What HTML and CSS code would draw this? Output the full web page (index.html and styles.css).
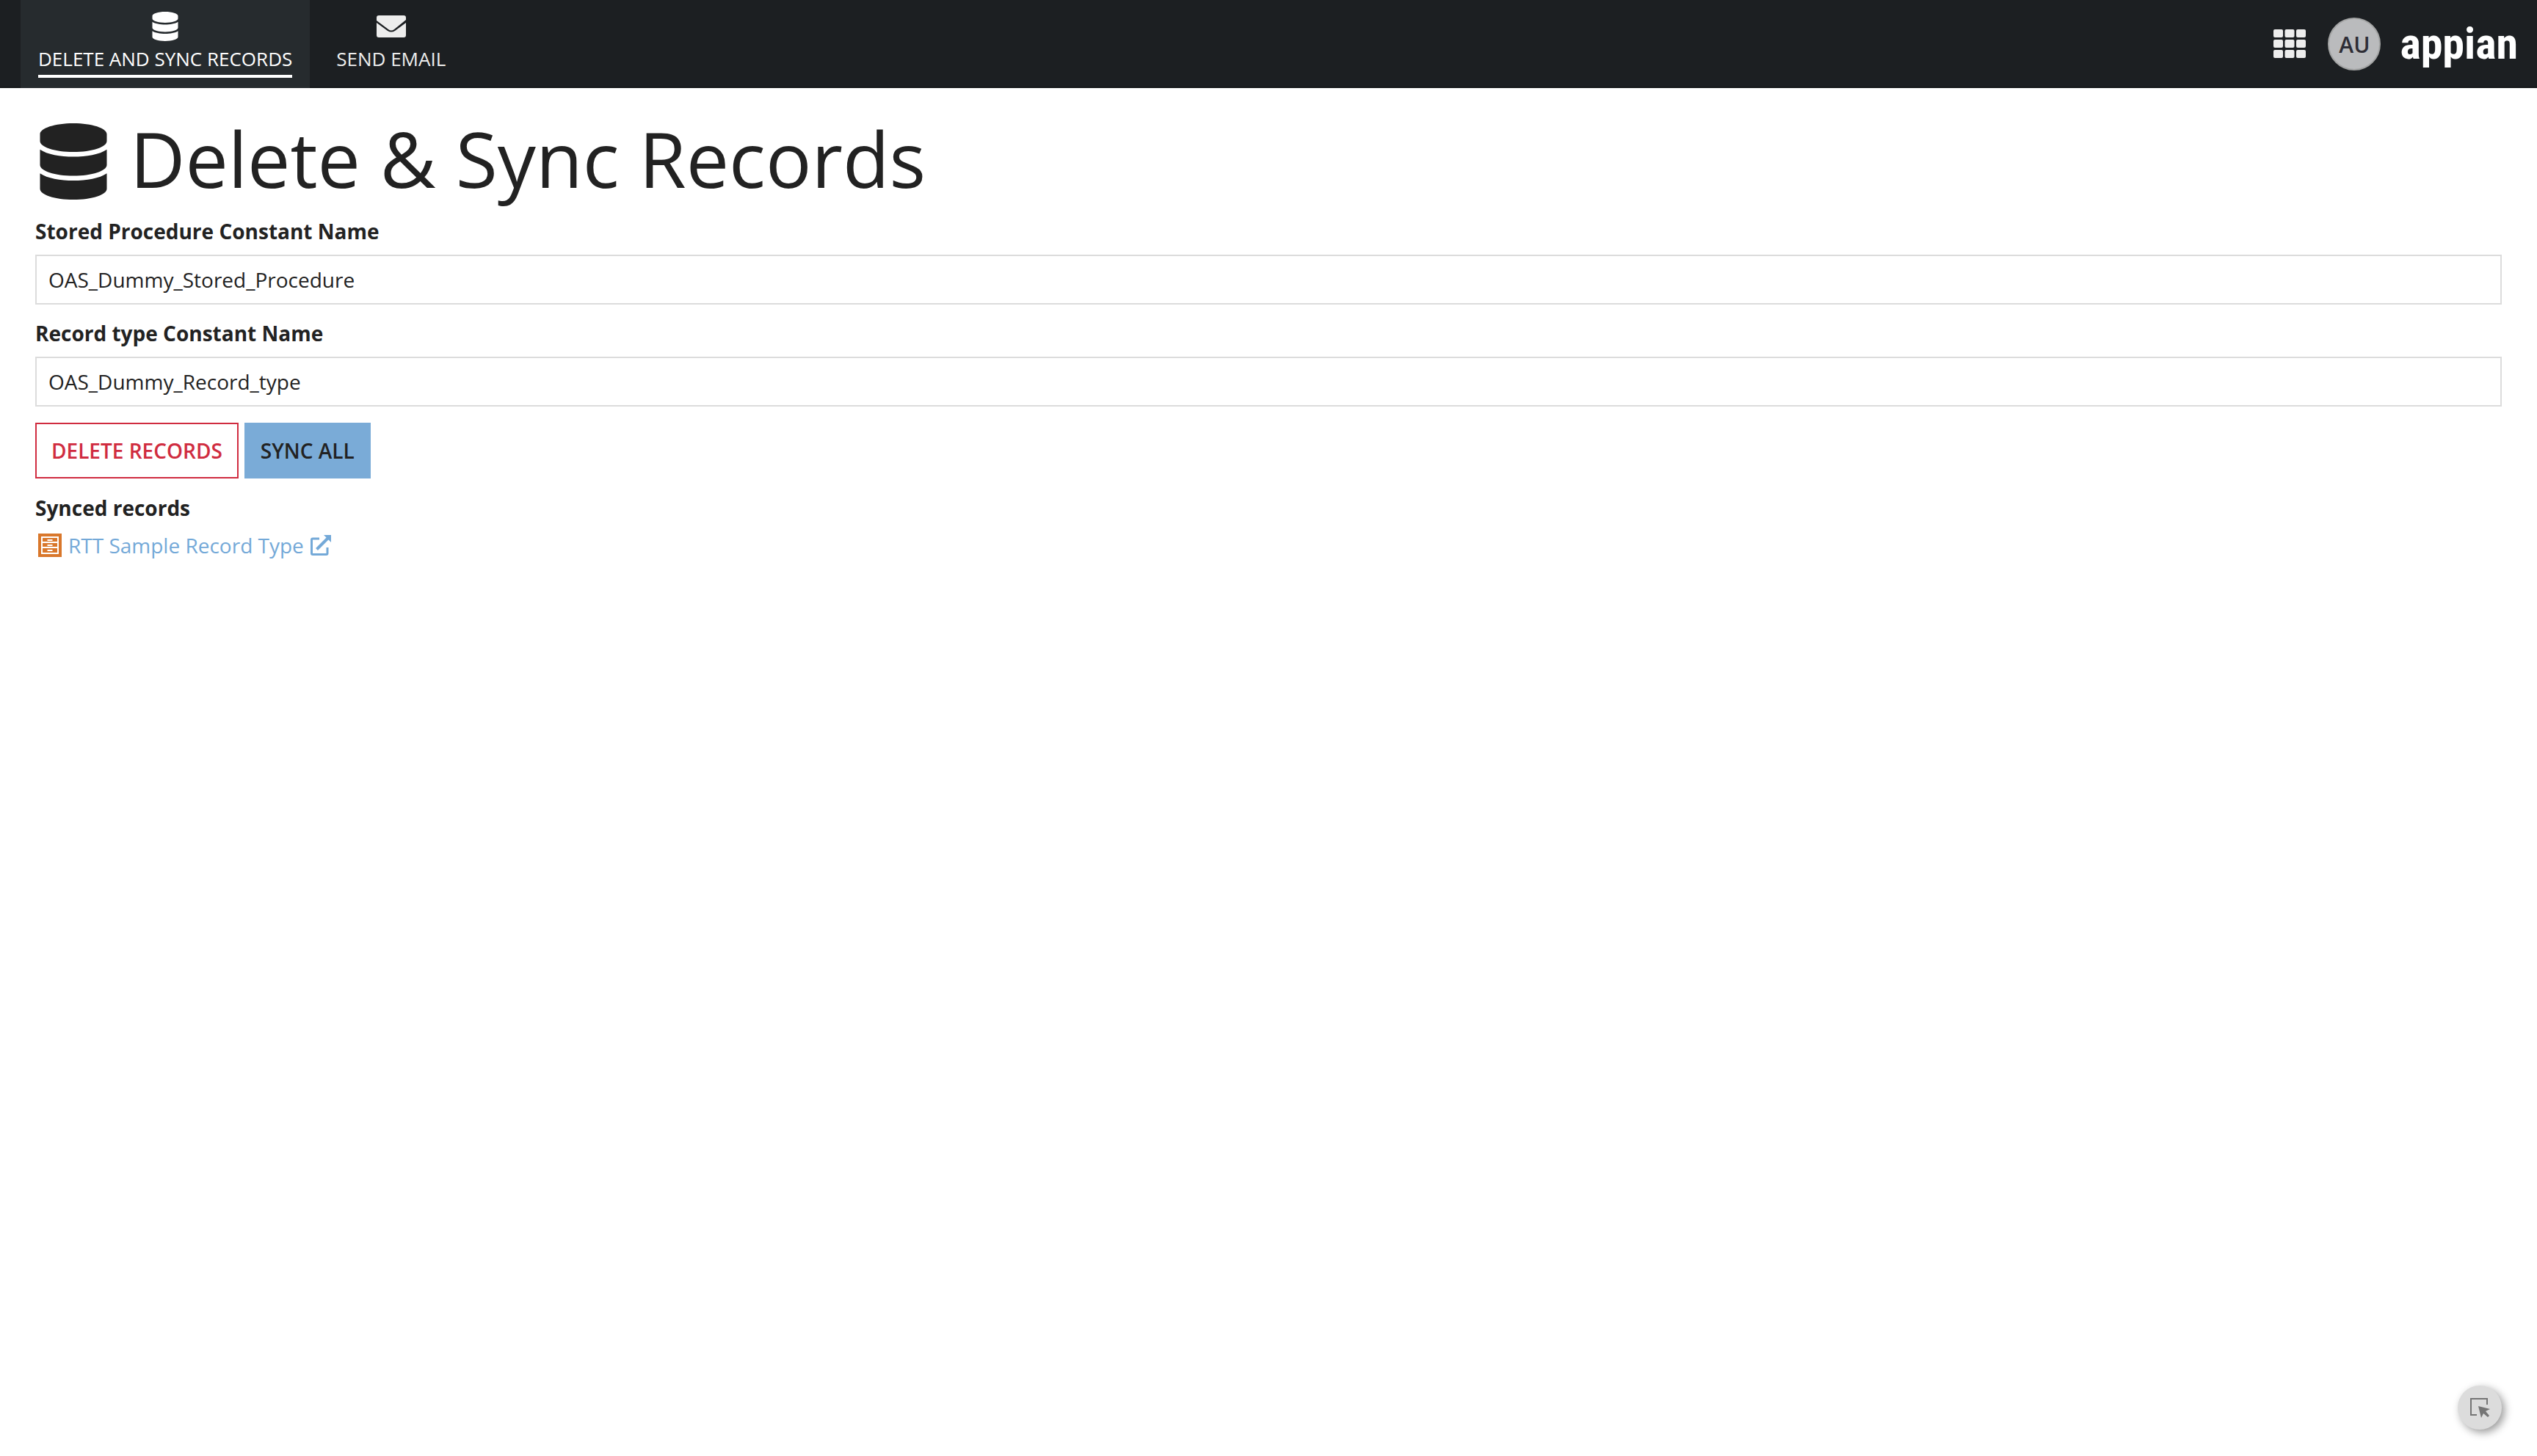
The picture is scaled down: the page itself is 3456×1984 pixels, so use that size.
FILE: index.html
```html
<!DOCTYPE html>
<html lang="en">
<head>
<meta charset="utf-8">
<title>Delete &amp; Sync Records</title>
<link rel="stylesheet" href="styles.css">
</head>
<body>
<svg class="sprite" aria-hidden="true">
  <symbol id="database" viewBox="0 0 448 512"><path d="M448 73.143v45.714C448 159.143 347.667 192 224 192S0 159.143 0 118.857V73.143C0 32.857 100.333 0 224 0s224 32.857 224 73.143zM448 176v102.857C448 319.143 347.667 352 224 352S0 319.143 0 278.857V176c48.125 33.143 136.208 48.572 224 48.572S399.874 209.143 448 176zm0 160v102.857C448 479.143 347.667 512 224 512S0 479.143 0 438.857V336c48.125 33.143 136.208 48.572 224 48.572S399.874 369.143 448 336z"/></symbol>
</svg>
<header class="topbar">
  <nav class="tabs">
    <a class="tab tab-active" href="#"><svg class="tab-icon"><use href="#database"/></svg><span class="tab-label">DELETE AND SYNC RECORDS</span></a>
    <a class="tab" href="#"><svg class="tab-icon" viewBox="0 0 40 40"><path d="M3 5H37Q40 5 40 8V11L24 24Q20 27 16 24L0 12V8Q0 5 3 5ZM0 15L15 26Q20 29 25 26L40 15V32Q40 35 37 35H3Q0 35 0 32Z"/></svg><span class="tab-label">SEND EMAIL</span></a>
  </nav>
  <div class="tools">
    <button class="apps" aria-label="Apps"><svg viewBox="0 0 44 40"><g id="row"><rect width="13" height="11" rx="2"/><rect x="15.500" width="13" height="11" rx="2"/><rect x="31" width="13" height="11" rx="2"/></g><use href="#row" y="14"/><use href="#row" y="28"/></svg></button>
    <button class="avatar">AU</button>
    <a class="logo" href="#">appian</a>
  </div>
</header>
<main class="page">
  <h1 class="title"><svg class="title-icon"><use href="#database"/></svg>Delete &amp; Sync Records</h1>
  <div class="field">
    <label class="label" for="procedure">Stored Procedure Constant Name</label>
    <input class="input" id="procedure" type="text" value="OAS_Dummy_Stored_Procedure">
  </div>
  <div class="field">
    <label class="label" for="record">Record type Constant Name</label>
    <input class="input" id="record" type="text" value="OAS_Dummy_Record_type">
  </div>
  <div class="actions">
    <button class="button button-danger">DELETE RECORDS</button>
    <button class="button button-primary">SYNC ALL</button>
  </div>
  <h2 class="label">Synced records</h2>
  <a class="record" href="#">
    <svg class="record-icon" viewBox="0 0 32 32"><path fill="#d9772b" d="M0 0h32v32H0z"/><path fill="#fff" d="M4 4h24v24H4z"/><path fill="#d9772b" d="M6 6h20v5H6zM6 13h20v5H6zM6 20h20v6H6z"/><path fill="#fff" d="M12.500 8h7v2h-7zM12.500 15h7v2h-7zM12.500 22h7v2h-7z"/></svg>
    <span>RTT Sample Record Type</span>
    <svg class="open-icon" viewBox="0 0 28 28"><path fill="none" stroke="currentColor" stroke-width="3" d="M12 5H3Q1.500 5 1.500 6.500V25Q1.500 26.500 3 26.500H21.500Q23 26.500 23 25V17"/><path fill="none" stroke="currentColor" stroke-width="4" d="M8.500 19.500L24 4"/><path fill="currentColor" d="M18 0H28V10Z"/></svg>
  </a>
</main>
<button class="picker" aria-label="Select element"><svg viewBox="0 0 28 28"><path fill="none" stroke="#757575" stroke-width="2" d="M10 24H2V2H24V10"/><path fill="#757575" d="M12 12L28 16L22 19L27 25L25 27L19 22L16 28Z"/></svg></button>
</body>
</html>
```
FILE: styles.css
```css
* {
  box-sizing: border-box;
}

body {
  margin: 0;
  background: #fff;
  color: #222;
  font-family: "Open Sans", sans-serif;
  font-size: 28px;
  line-height: 38px;
}

a {
  text-decoration: none;
}

button {
  font-family: inherit;
  cursor: pointer;
}

svg {
  display: block;
}

.sprite {
  display: none;
}

.topbar {
  display: flex;
  justify-content: space-between;
  height: 120px;
  padding: 0 26px 0 28px;
  background: #1c1f22;
  box-shadow: inset 0 -2px #15181a;
}

.tabs {
  display: flex;
  gap: 12px;
}

.tab {
  display: flex;
  flex-direction: column;
  align-items: center;
  padding: 16px 24px 14px;
  color: #ededed;
  fill: #ededed;
  font-size: 26px;
}

.tab-active {
  background: #262b2e;
  color: #fff;
  fill: #fff;
}

.tab-icon {
  width: 40px;
  height: 40px;
}

.tab-label {
  height: 50px;
  padding-top: 5px;
  border-bottom: 4px solid transparent;
}

.tab-active .tab-label {
  border-color: #fff;
}

.tools {
  display: flex;
  align-items: center;
}

.apps {
  width: 44px;
  height: 40px;
  margin-right: 30px;
  padding: 0;
  border: 0;
  background: none;
  fill: #ededed;
}

.avatar {
  width: 72px;
  height: 72px;
  margin-right: 26px;
  padding: 0;
  border: 2px solid #a3a4a4;
  border-radius: 50%;
  background: #babbbd;
  color: #2e2d35;
  font-size: 30px;
  font-weight: 600;
}

.logo {
  color: #fff;
  font-family: "Liberation Sans Narrow", "Roboto Condensed", Roboto, sans-serif;
  font-size: 60px;
  font-weight: 700;
}

.page {
  padding: 40px 48px;
}

.title {
  display: flex;
  align-items: flex-end;
  gap: 31px;
  margin: 0 0 25px;
  padding-left: 6px;
  font-size: 104px;
  font-weight: 400;
  line-height: 112px;
}

.title-icon {
  width: 92px;
  height: 104px;
  fill: #222;
}

.field {
  margin-bottom: 21px;
}

.label {
  display: block;
  margin: 0 0 14px;
  font-size: 28px;
  font-weight: 700;
  line-height: 36px;
}

.input {
  display: block;
  width: 100%;
  height: 68px;
  padding: 0 16px;
  border: 2px solid #dcdcdc;
  background: #fff;
  color: #222;
  font: inherit;
}

.actions {
  display: flex;
  gap: 8px;
  margin: 22px 0;
}

.button {
  height: 76px;
  padding: 0 20px;
  border: 2px solid #d02c40;
  background: #fff;
  color: #d02c40;
  font-size: 28px;
  font-weight: 600;
}

.button-primary {
  border-color: #7aabd7;
  background: #7aabd7;
  color: #222;
}

.record {
  display: inline-flex;
  align-items: center;
  gap: 9px;
  padding-left: 4px;
  color: #74a9d8;
}

.record-icon {
  width: 32px;
  height: 32px;
}

.open-icon {
  width: 28px;
  height: 28px;
}

.picker {
  display: flex;
  position: fixed;
  right: 48px;
  bottom: 36px;
  align-items: center;
  justify-content: center;
  width: 60px;
  height: 60px;
  padding: 0;
  border: 0;
  border-radius: 50%;
  background: #dcdcdc;
  box-shadow: 4px 4px 12px rgba(0, 0, 0, 0.4);
}

.picker svg {
  width: 28px;
  height: 28px;
}
```
